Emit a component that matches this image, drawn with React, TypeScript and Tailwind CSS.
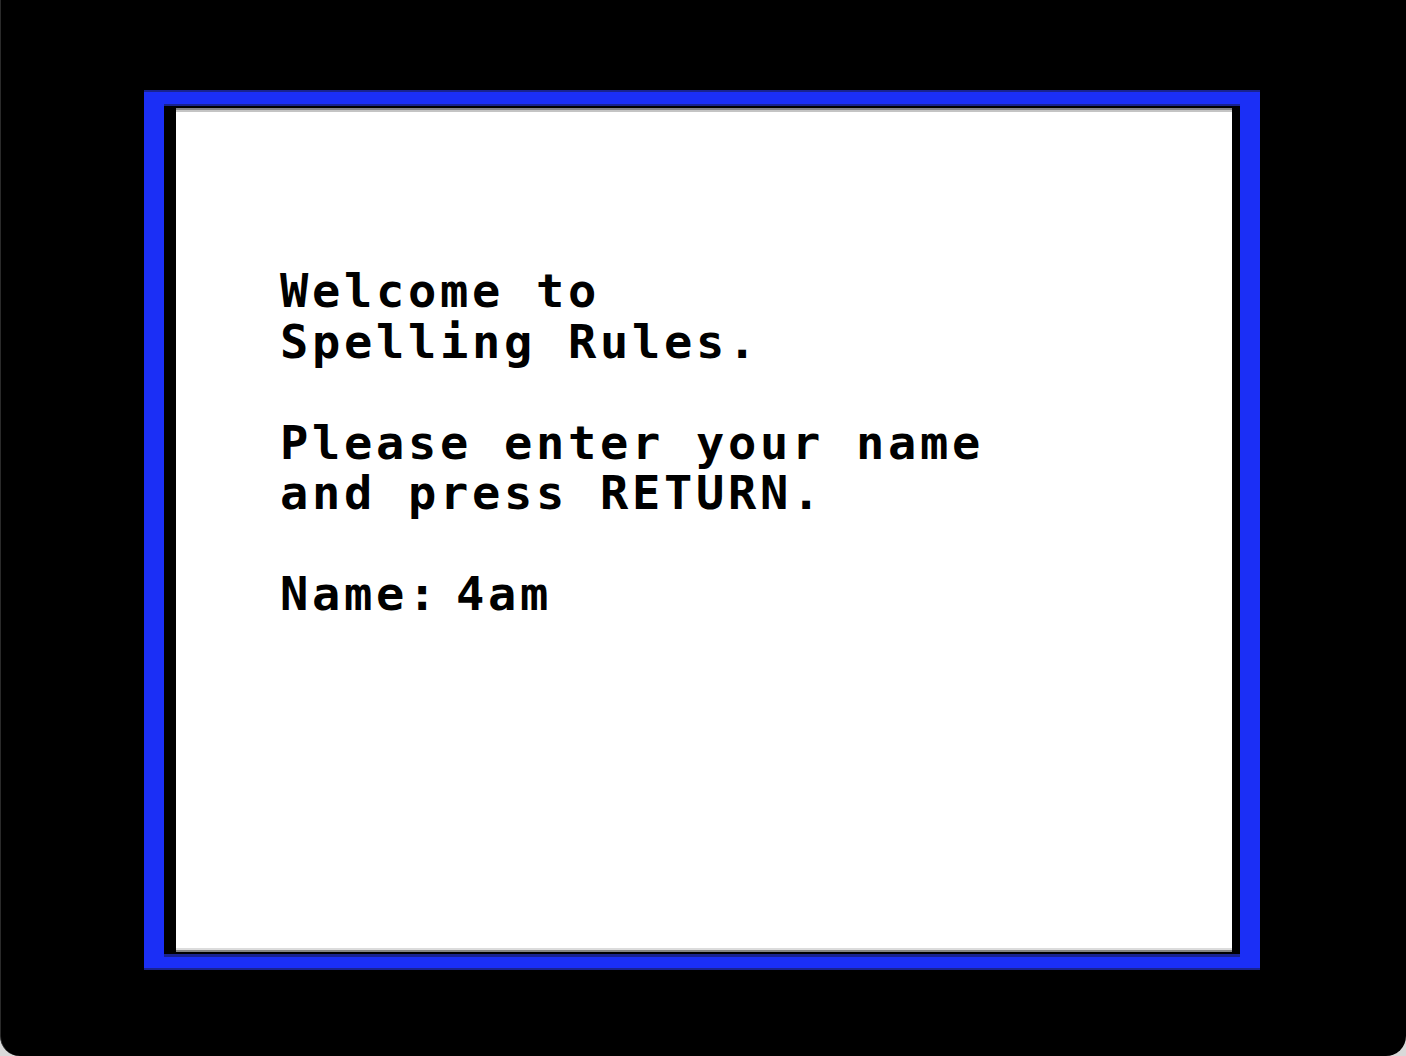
import * as React from "react";

const lines: React.ReactNode[] = [
  "Welcome to",
  "Spelling Rules.",
  "",
  "Please enter your name",
  "and press RETURN.",
  "",
  <>
    Name:<span className="ml-[16px]">4am</span>
  </>,
];

export default function App() {
  return (
    <div className="w-[1406px] h-[1056px] bg-[#d9d9d9] overflow-hidden">
      <div className="w-full h-full bg-black rounded-b-[20px] border-l border-[#2a2a2a] pt-[90px] pl-[143px]">
        <div className="w-[1116px] h-[880px] bg-[#1b2ff6] border-t-2 border-b-2 border-[#19238f] pt-[12px] px-[20px] pb-[11px] flex flex-col">
          <div className="flex-1 bg-black border-t-2 border-b-[3px] border-[#19238f] pt-[2px] pb-[2px] pl-[12px] pr-[8px] flex flex-col">
            <div className="flex-1 bg-white border-t-2 border-b-2 border-[#858585] shadow-[inset_0_2px_0_#c4c4c4,inset_0_-2px_0_#dcdcdc] pl-[104px] pt-[156px]">
              <div
                className="text-black font-bold text-[47px] leading-[50.5px] tracking-[3.7px] whitespace-pre"
                style={{ fontFamily: '"DejaVu Sans Mono", "Liberation Mono", monospace' }}
              >
                {lines.map((l, i) => (
                  <div key={i} className="h-[50.5px]">
                    {l}
                  </div>
                ))}
              </div>
            </div>
          </div>
        </div>
      </div>
    </div>
  );
}
